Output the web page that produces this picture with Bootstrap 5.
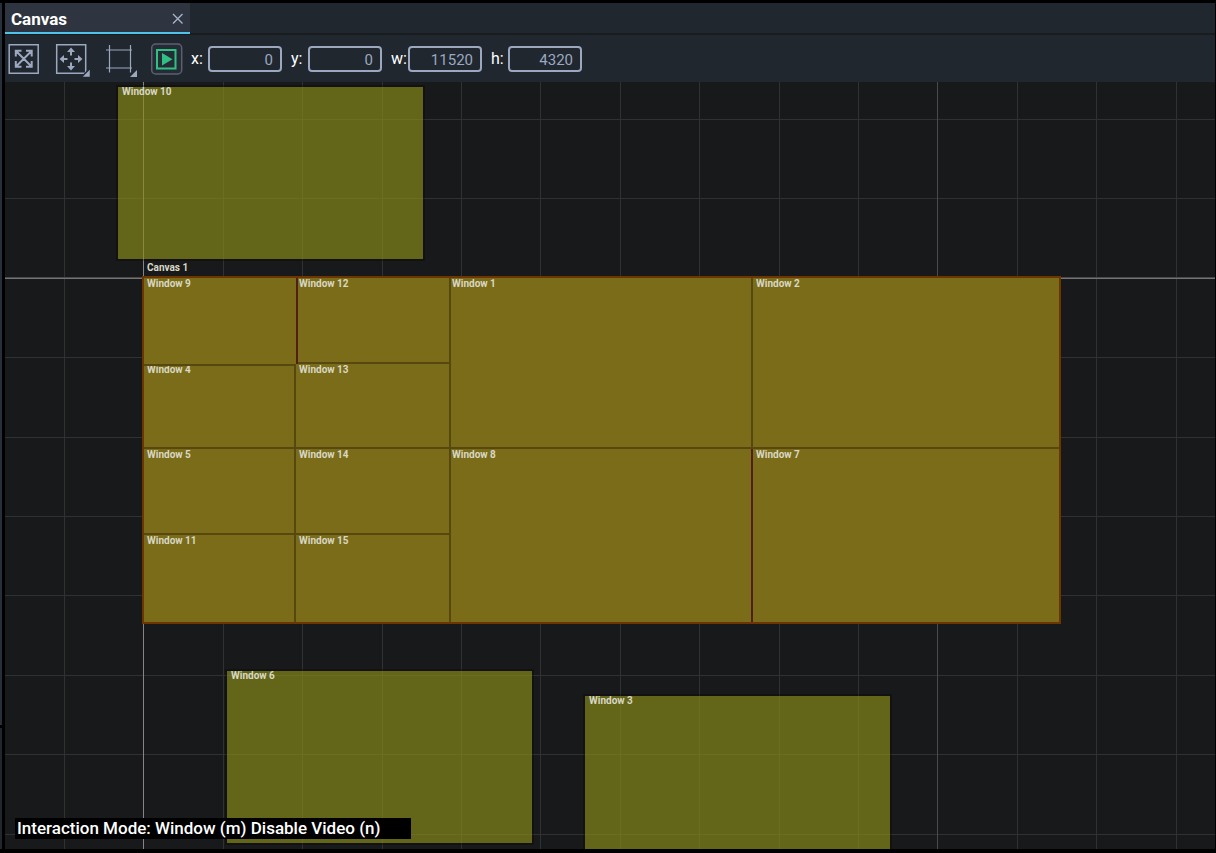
<!DOCTYPE html>
<html lang="en">
<head>
<meta charset="utf-8">
<meta name="viewport" content="width=device-width, initial-scale=1">
<title>Canvas</title>
<link href="https://cdn.jsdelivr.net/npm/bootstrap@5.3.0/dist/css/bootstrap.min.css" rel="stylesheet">
<style>
body { background: #000; color: #fff; font-family: Roboto, sans-serif; font-size: 16px; line-height: 20px; }
.app { padding: 3px 1px 4px 0; }
.side { width: 2px; margin-right: 3px; background: #27303a; }
.side-top { flex: 0 0 725px; border-bottom: 3px solid #000; }
.side-low { background: #20272e; }
.tabs { height: 32px; background: #20272f; border-bottom: 2px solid #191c1f; }
.tab { width: 185px; height: 31px; padding: 2px 6px 0; background: #2f3540; border-bottom: 2px solid #4fc3ea; }
.tab a { color: #fff; font-size: 17px; font-weight: 700; }
.tools { height: 47px; background: #20272f; padding-left: 3px; }
.tool, .tab-close { background: none; border: 0; padding: 0; display: block; line-height: 0; }
.tool { margin-right: 14px; }
.tool svg, .tab-close svg { display: block; }
.fields { gap: 9px; margin-left: -6px; }
.field-name { width: 17px; }
.fields input { width: 74px; height: 26px; padding: 2px 7px 0 0; background: transparent; border: 2px solid #9ba8c0; border-radius: 4px; color: #9ba8c0; font-size: 15px; text-align: right; }
.stage { background: #18191a; }
.grid-lines { position: absolute; inset: 0; width: 100%; height: 100%; }
.board { position: absolute; left: 137px; top: 194px; width: 919px; height: 348px; background: #5c2f1a; border: 2px solid #6d3600; }
.pane, .board-name { font-size: 10px; line-height: 10px; font-weight: 700; color: #d8d8c4; }
.pane { position: absolute; padding-left: 4px; background: rgba(137,138,26,.67); box-shadow: 0 0 0 2px rgba(0,0,0,.25); overflow: hidden; }
.board .pane { box-shadow: none; border: 0 solid #57480f; padding-left: 3px; padding-top: 1px; }
.board .edge-r { border-right-width: 2px; }
.board .edge-b { border-bottom-width: 2px; }
.board .edge-red { border-right-color: #511f16; }
.board .near { padding-left: 1px; }
.board .tight { padding-top: 0; line-height: 8px; }
.board-name { position: absolute; left: 142px; top: 181px; }
.mode { position: absolute; left: 10px; bottom: 10px; width: 396px; height: 21px; padding-left: 2px; background: #000; font-size: 17px; font-weight: 500; line-height: 21px; }
</style>
</head>
<body>
<div class="app d-flex vh-100">
  <div class="side d-flex flex-column flex-shrink-0">
    <div class="side-top"></div>
    <div class="side-low flex-fill"></div>
  </div>
  <div class="d-flex flex-column flex-fill overflow-hidden">
    <nav class="tabs flex-shrink-0">
      <div class="tab d-flex align-items-center justify-content-between">
        <a href="#stage" class="text-decoration-none">Canvas</a>
        <button class="tab-close" type="button" aria-label="Close">
          <svg width="12" height="12" viewBox="0 0 12 12" stroke="#a9b4ca" stroke-width="1.3"><path d="M1 1l9.500 9.500M10.500 1L1 10.500"/></svg>
        </button>
      </div>
    </nav>
    <div class="tools d-flex align-items-center flex-shrink-0">
      <button class="tool" type="button" aria-label="Zoom to fit">
        <svg width="33" height="36" viewBox="0 0 33 36" fill="none" stroke="#9ba8c0" stroke-width="1.500"><path d="M1.200 3.700h29v28.600h-29z"/><path d="M8 10l15.500 15.500M23.500 10L8 25.500M7.800 15.500v-5.700h5.700M18 9.800h5.700v5.700M7.800 20v5.700h5.700M18 25.700h5.700V20" stroke-width="2"/></svg>
      </button>
      <button class="tool" type="button" aria-label="Move">
        <svg width="35" height="36" viewBox="0 0 35 36" fill="none" stroke="#9ba8c0" stroke-width="1.500"><path d="M1.700 3.700h29v28.600h-29z"/><path d="M16 8v6.500M16 21.500V28M6 18h6.500M19.500 18H26" stroke-width="2"/><path d="M16 6.500l4 4.500h-8zM16 29.500l4-4.500h-8zM4.500 18l4.500-4v8zM27.500 18l-4.500-4v8z" fill="#9ba8c0" stroke="none"/><path d="M35.500 27v9.500H26z" fill="#9ba8c0" stroke="#20272f" stroke-width="1.500"/></svg>
      </button>
      <button class="tool" type="button" aria-label="Frame">
        <svg width="33" height="36" viewBox="0 0 33 36" fill="none" stroke="#9ba8c0"><path d="M5.500 4v27.500M26.500 4v27.500M2 9h26M2 27h26" stroke-width="1.200"/><path d="M33 29v7h-7z" fill="#9ba8c0" stroke="none"/></svg>
      </button>
      <button class="tool" type="button" aria-label="Play video">
        <svg width="32" height="36" viewBox="0 0 32 36" fill="none"><rect x=".7" y="3" width="30" height="30" rx="4" stroke="#5b6070" stroke-width="1.500" fill="#262c35"/><path d="M6 9h18.500v18.500H6z" stroke="#2fc183" stroke-width="2"/><path d="M11 12l10.500 6.200L11 24.500z" fill="#2fc183"/></svg>
      </button>
      <div class="fields d-flex align-items-center">
        <label class="d-flex align-items-center"><span class="field-name">x:</span><input type="text" value="0"></label>
        <label class="d-flex align-items-center"><span class="field-name">y:</span><input type="text" value="0"></label>
        <label class="d-flex align-items-center"><span class="field-name">w:</span><input type="text" value="11520"></label>
        <label class="d-flex align-items-center"><span class="field-name">h:</span><input type="text" value="4320"></label>
      </div>
    </div>
    <main id="stage" class="stage position-relative overflow-hidden flex-fill">
      <svg class="grid-lines" aria-hidden="true">
        <defs>
          <pattern id="cells" x="138" y="196" width="397" height="397" patternUnits="userSpaceOnUse">
            <path d="M.5 0v397M80.500 0v397M159.500 0v397M239.500 0v397M318.500 0v397M0 .5h397M0 79.500h397M0 159.500h397M0 238.500h397M0 317.500h397" stroke="#303131"/>
          </pattern>
        </defs>
        <rect width="100%" height="100%" fill="url(#cells)"/>
        <rect x="138" width="1" height="100%" fill="#858585"/>
        <rect x="932" width="1" height="100%" fill="#4a4a4a"/>
        <rect y="195" width="100%" height="1" fill="#4a4a4a"/>
        <rect y="196" width="100%" height="1" fill="#747474"/>
      </svg>
      <div class="pane" style="left:113px;top:5px;width:305px;height:172px">Window 10</div>
      <div class="board-name">Canvas 1</div>
      <div class="board">
        <div class="pane edge-r edge-b edge-red" style="left:0px;top:0px;width:154px;height:88px">Window 9</div>
        <div class="pane near edge-r edge-b" style="left:154px;top:0px;width:153px;height:86px">Window 12</div>
        <div class="pane near edge-r edge-b" style="left:307px;top:0px;width:302px;height:171px">Window 1</div>
        <div class="pane edge-b" style="left:609px;top:0px;width:306px;height:171px">Window 2</div>
        <div class="pane tight edge-r edge-b" style="left:0px;top:88px;width:152px;height:83px">Window 4</div>
        <div class="pane edge-r edge-b" style="left:152px;top:86px;width:155px;height:85px">Window 13</div>
        <div class="pane edge-r edge-b" style="left:0px;top:171px;width:152px;height:86px">Window 5</div>
        <div class="pane edge-r edge-b" style="left:152px;top:171px;width:155px;height:86px">Window 14</div>
        <div class="pane near edge-r edge-red" style="left:307px;top:171px;width:302px;height:173px">Window 8</div>
        <div class="pane" style="left:609px;top:171px;width:306px;height:173px">Window 7</div>
        <div class="pane edge-r" style="left:0px;top:257px;width:152px;height:87px">Window 11</div>
        <div class="pane edge-r" style="left:152px;top:257px;width:155px;height:87px">Window 15</div>
      </div>
      <div class="pane" style="left:222px;top:589px;width:305px;height:172px">Window 6</div>
      <div class="pane" style="left:580px;top:614px;width:305px;height:172px">Window 3</div>
      <div class="mode">Interaction Mode: Window (m) Disable Video (n)</div>
    </main>
  </div>
</div>
<script src="https://cdn.jsdelivr.net/npm/bootstrap@5.3.0/dist/js/bootstrap.bundle.min.js"></script>
</body>
</html>
